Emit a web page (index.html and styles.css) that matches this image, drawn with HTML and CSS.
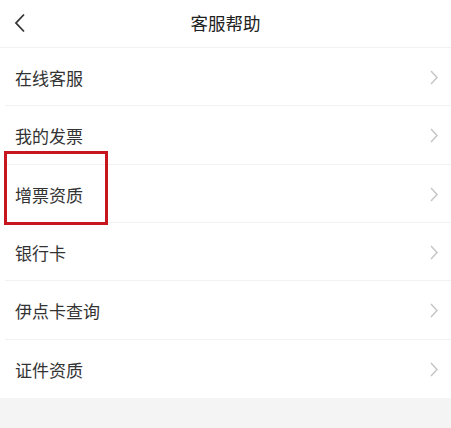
FILE: index.html
```html
<!DOCTYPE html>
<html lang="zh-CN">
<head>
<meta charset="utf-8">
<title>客服帮助</title>
<link rel="stylesheet" href="styles.css">
</head>
<body>
<div class="page">
  <header class="topbar">
    <svg class="back" width="12" height="20" viewBox="0 0 12 20"><path d="M10 1.5 L2 10 L10 18.5" fill="none" stroke="#333" stroke-width="1.8"/></svg>
    <h1 class="title">客服帮助</h1>
  </header>
  <ul class="list">
    <li class="row"><span class="label">在线客服</span><svg class="arrow" width="8" height="15" viewBox="0 0 8 15"><path d="M1 1 L7 7.5 L1 14" fill="none" stroke="#c6c6c6" stroke-width="1.5"/></svg></li>
    <li class="row"><span class="label">我的发票</span><svg class="arrow" width="8" height="15" viewBox="0 0 8 15"><path d="M1 1 L7 7.5 L1 14" fill="none" stroke="#c6c6c6" stroke-width="1.5"/></svg></li>
    <li class="row"><span class="label">增票资质</span><svg class="arrow" width="8" height="15" viewBox="0 0 8 15"><path d="M1 1 L7 7.5 L1 14" fill="none" stroke="#c6c6c6" stroke-width="1.5"/></svg></li>
    <li class="row"><span class="label">银行卡</span><svg class="arrow" width="8" height="15" viewBox="0 0 8 15"><path d="M1 1 L7 7.5 L1 14" fill="none" stroke="#c6c6c6" stroke-width="1.5"/></svg></li>
    <li class="row"><span class="label">伊点卡查询</span><svg class="arrow" width="8" height="15" viewBox="0 0 8 15"><path d="M1 1 L7 7.5 L1 14" fill="none" stroke="#c6c6c6" stroke-width="1.5"/></svg></li>
    <li class="row"><span class="label">证件资质</span><svg class="arrow" width="8" height="15" viewBox="0 0 8 15"><path d="M1 1 L7 7.5 L1 14" fill="none" stroke="#c6c6c6" stroke-width="1.5"/></svg></li>
  </ul>
  <div class="highlight"></div>
</div>
</body>
</html>
```
FILE: styles.css
```css
* { box-sizing: border-box; }
html, body {
  margin: 0;
  padding: 0;
  background: #f4f4f4;
  font-family: "Noto Sans CJK SC", "Noto Sans", sans-serif;
  color: #333;
}
.page {
  position: relative;
  width: 451px;
}
.topbar {
  height: 48px;
  background: #fff;
  border-bottom: 1px solid #f2f2f2;
  display: flex;
  align-items: center;
  justify-content: center;
  position: relative;
}
.back {
  position: absolute;
  left: 14px;
  top: 13px;
}
.title {
  margin: 0;
  font-size: 17.5px;
  font-weight: 400;
  color: #222;
  line-height: 1;
  margin-top: -1px;
}
.list {
  list-style: none;
  margin: 0;
  padding: 0 0 0 5px;
  background: #fff;
}
.row {
  height: 58.33px;
  display: flex;
  align-items: center;
  justify-content: space-between;
  padding: 0 13px 0 10px;
  border-bottom: 1px solid #f2f2f2;
}
.row:last-child { border-bottom: none; }
.label {
  font-size: 17px;
  line-height: 1;
  color: #333;
  margin-top: 2px;
}
.arrow { display: block; margin-top: 2px; }
.highlight {
  position: absolute;
  left: 4px;
  top: 151px;
  width: 104px;
  height: 74px;
  border: 3px solid #c8161e;
}
```
